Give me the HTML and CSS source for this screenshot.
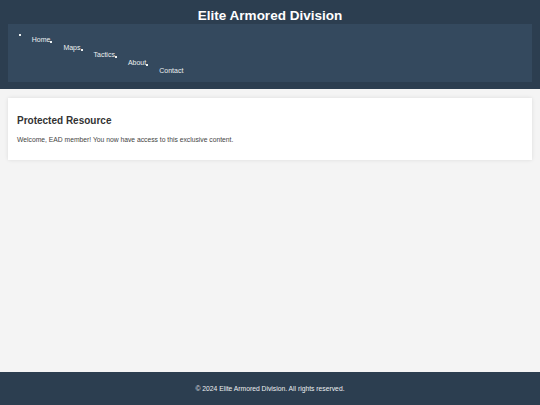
FILE: index.html
```html
<!DOCTYPE html>
<html lang="en">
<head>
    <meta charset="UTF-8">
    <meta name="viewport" content="width=device-width, initial-scale=1.0">
    <title>Elite Armored Division</title>
    <link rel="stylesheet" href="styles.css">
</head>
<body>
    <header class="site-header">
        <h1>Elite Armored Division</h1>
        <nav class="main-nav">
            <ul>
                <li><a href="#">Home</a></li>
                <li><a href="#">Maps</a></li>
                <li><a href="#">Tactics</a></li>
                <li><a href="#">About</a></li>
                <li><a href="#">Contact</a></li>
            </ul>
        </nav>
    </header>

    <main class="content">
        <section class="card">
            <h2>Protected Resource</h2>
            <p>Welcome, EAD member! You now have access to this exclusive content.</p>
        </section>
    </main>

    <footer class="site-footer">
        <p>&copy; 2024 Elite Armored Division. All rights reserved.</p>
    </footer>
</body>
</html>
```

FILE: styles.css
```css
* {
    margin: 0;
    padding: 0;
    box-sizing: border-box;
}

body {
    font-family: "Liberation Sans", Arial, sans-serif;
    background: #f4f4f4;
    min-height: 100vh;
    display: flex;
    flex-direction: column;
}

.site-header {
    background: #2c3e50;
    color: #fff;
    padding: 7.5px 8px 7.3px;
}

.site-header h1 {
    font-size: 13.5px;
    line-height: 16.5px;
    text-align: center;
}

.main-nav {
    background: #34495e;
    padding: 9.7px 10.7px 7px;
}

.main-nav ul {
    list-style: none;
    display: flex;
    align-items: flex-start;
}

.main-nav li {
    display: flex;
    align-items: flex-start;
}

.main-nav li::before {
    content: "";
    flex: none;
    width: 2px;
    height: 2px;
    background: #ecf0f1;
    margin-right: 11px;
}

/* each item sits a step lower than the one before */
.main-nav li:nth-child(2) { margin-top: 7.6px; }
.main-nav li:nth-child(3) { margin-top: 15.2px; }
.main-nav li:nth-child(4) { margin-top: 22.8px; }
.main-nav li:nth-child(5) { margin-top: 30.4px; }

.main-nav a {
    display: block;
    margin-top: 2.5px;
    font-size: 7px;
    line-height: 8px;
    color: #ecf0f1;
    text-decoration: none;
}

.content {
    flex: 1;
    padding: 9.3px 8px;
}

.card {
    background: #fff;
    padding: 9px;
    box-shadow: 0 0 4px rgba(0, 0, 0, 0.1);
}

.card h2 {
    font-size: 10px;
    line-height: 12px;
    color: #333;
    margin: 8.3px 0 9px;
}

.card p {
    font-size: 6.75px;
    line-height: 8px;
    color: #444;
    margin-bottom: 7px;
}

.site-footer {
    background: #2c3e50;
    color: #ecf0f1;
    padding: 12.7px 8px 12.3px;
    text-align: center;
    font-size: 6.75px;
    line-height: 8px;
}
```
